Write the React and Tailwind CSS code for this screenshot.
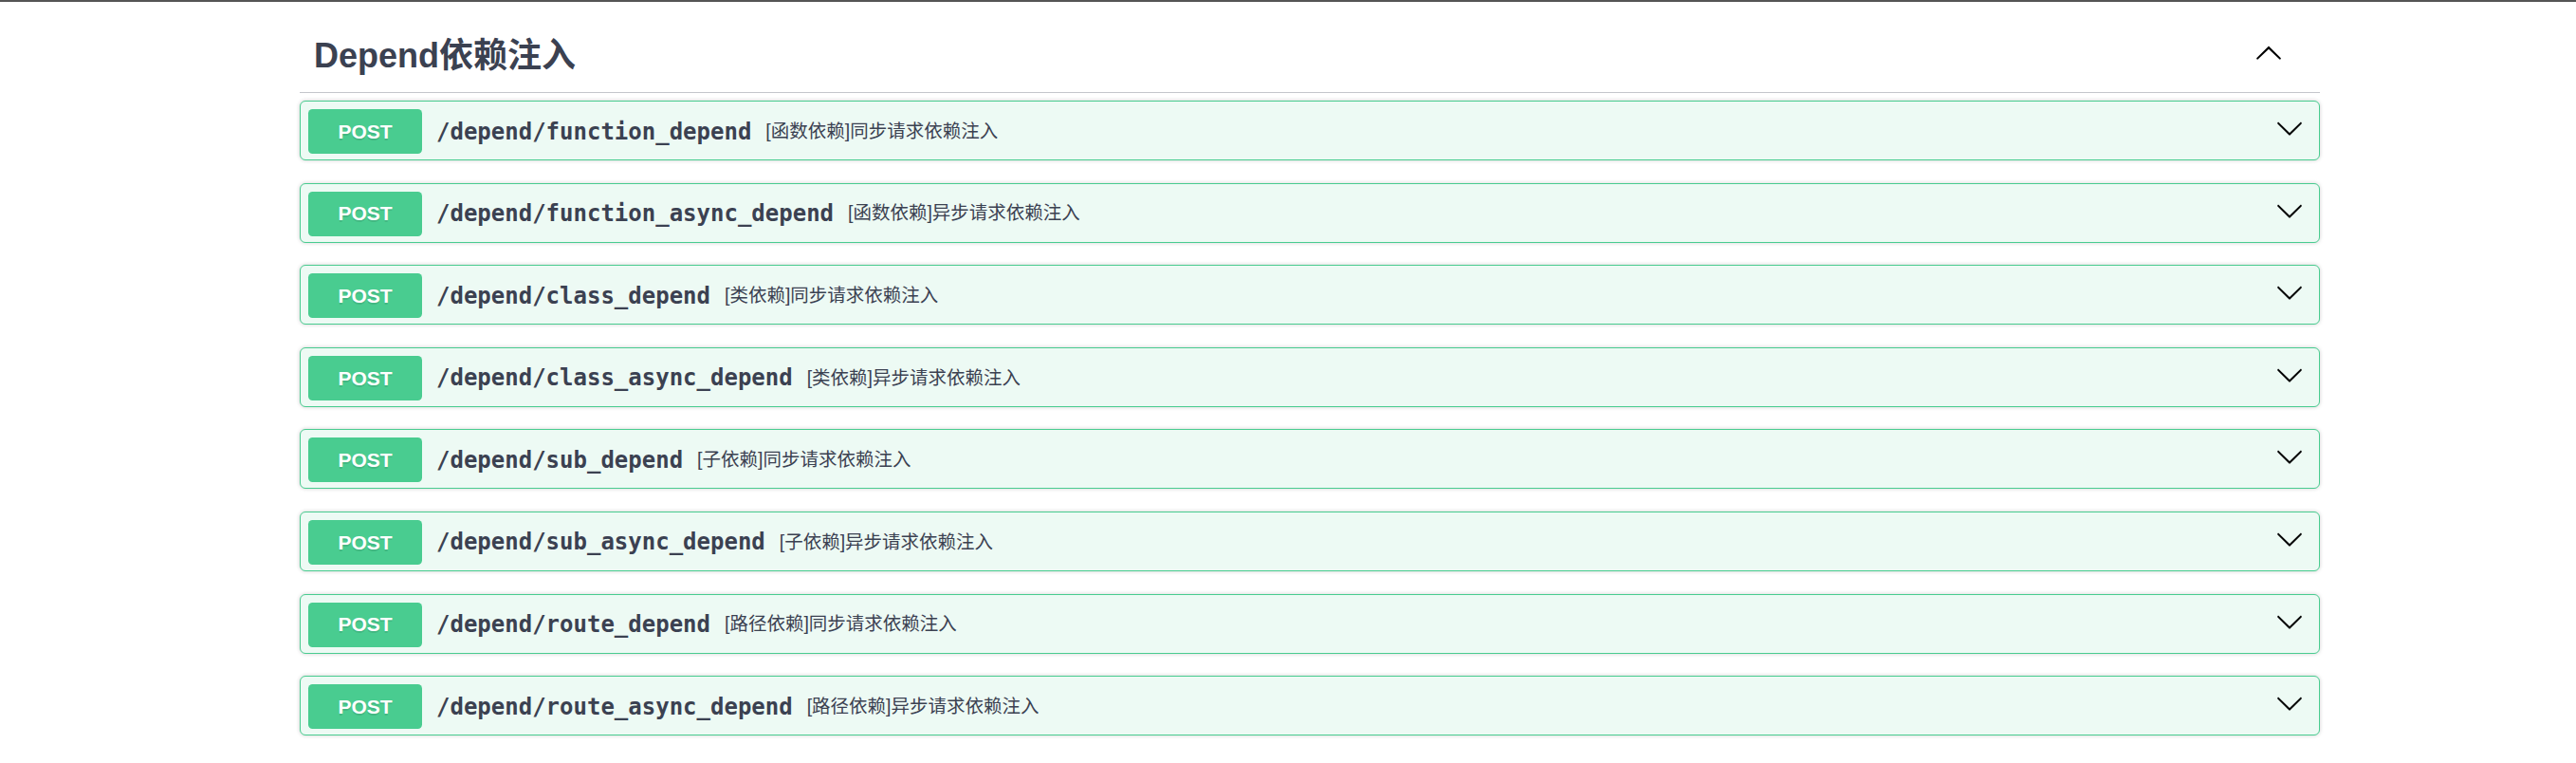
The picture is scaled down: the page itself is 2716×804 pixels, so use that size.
import React from 'react'

const ops = [
  { path: '/depend/function_depend', summary: '[函数依赖]同步请求依赖注入' },
  { path: '/depend/function_async_depend', summary: '[函数依赖]异步请求依赖注入' },
  { path: '/depend/class_depend', summary: '[类依赖]同步请求依赖注入' },
  { path: '/depend/class_async_depend', summary: '[类依赖]异步请求依赖注入' },
  { path: '/depend/sub_depend', summary: '[子依赖]同步请求依赖注入' },
  { path: '/depend/sub_async_depend', summary: '[子依赖]异步请求依赖注入' },
  { path: '/depend/route_depend', summary: '[路径依赖]同步请求依赖注入' },
  { path: '/depend/route_async_depend', summary: '[路径依赖]异步请求依赖注入' },
]

const ArrowUp = () => (
  <svg width="30" height="30" viewBox="0 0 20 20" className="mb-[7px] shrink-0">
    <path
      fill="#000"
      d="M17.418 14.908c.272.268.709.268.979 0s.271-.701 0-.969l-7.908-7.83c-.27-.268-.707-.268-.979 0l-7.908 7.83c-.27.268-.27.701 0 .969.271.268.709.268.979 0L10 7.767l7.418 7.141z"
    />
  </svg>
)

const ArrowDown = () => (
  <svg width="30" height="30" viewBox="0 0 20 20" className="mb-[7px] shrink-0">
    <path
      fill="#000"
      d="M17.418 6.109c.272-.268.709-.268.979 0s.271.701 0 .969l-7.908 7.83c-.27.268-.707.268-.979 0l-7.908-7.83c-.27-.268-.27-.701 0-.969.271-.268.709-.268.979 0L10 13.25l7.418-7.141z"
    />
  </svg>
)

const sans = 'font-["Liberation_Sans","Noto_Sans_CJK_SC",sans-serif]'

const App = () => {
  return (
    <div className={`w-full h-[804px] overflow-hidden bg-white text-[#3b4151] ${sans}`}>
      {/* top bar edge */}
      <div className="h-[2px] bg-[#555]" />

      <div className="ml-[316px] w-[2130px]">
        {/* Tag heading */}
        <div className="mt-[18px] h-[78px] flex items-center justify-between pl-[15px] pr-[39px] border-b border-[#c4c6cb]">
          <h3 className="text-[36px] font-bold leading-none">Depend依赖注入</h3>
          <ArrowUp />
        </div>

        {/* Operations */}
        <div className="mt-[8px] flex flex-col gap-[23.6px]">
          {ops.map((op) => (
            <div
              key={op.path}
              className="h-[63px] flex items-center pl-[8px] pr-[16px] pt-[8px] pb-[6px] bg-[#edfaf4] border border-[#49cc90] rounded-[6px] shadow-[0_0_4.5px_rgba(0,0,0,0.19)]"
            >
              <span className="h-[47px] w-[120px] shrink-0 flex items-center justify-center rounded-[4.5px] bg-[#49cc90] text-white text-[21px] font-bold [text-shadow:0_1.5px_0_rgba(0,0,0,0.1)]">
                POST
              </span>
              <span className='px-[15px] text-[24px] font-bold font-["DejaVu_Sans_Mono",monospace] whitespace-nowrap'>
                {op.path}
              </span>
              <span className="flex-1 text-[19.5px] whitespace-nowrap">{op.summary}</span>
              <ArrowDown />
            </div>
          ))}
        </div>
      </div>
    </div>
  )
}

export default App
